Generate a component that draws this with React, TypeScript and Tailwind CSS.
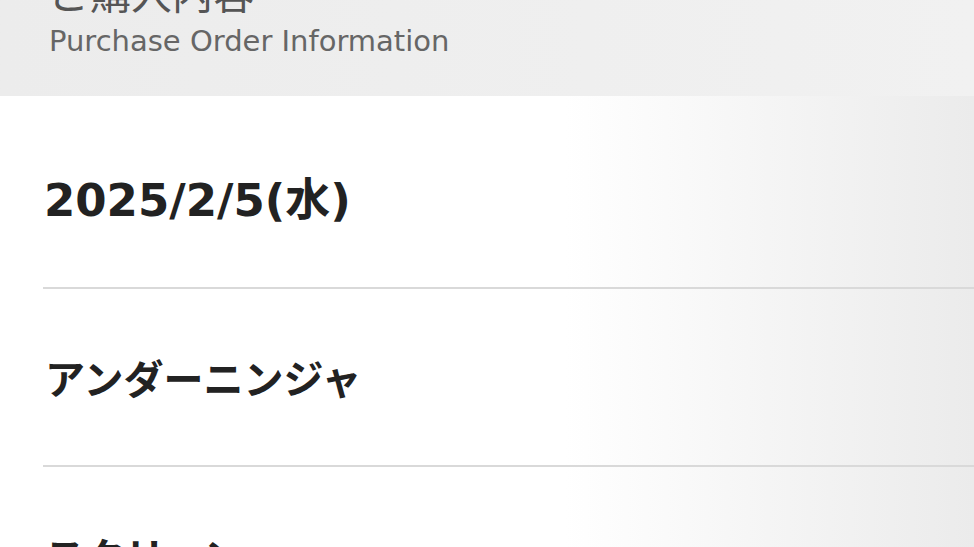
const rows = ['2025/2/5(水)', 'アンダーニンジャ', 'スクリーン'];

export default function App() {
  return (
    <div
      className="w-[974px] h-[547px] overflow-hidden bg-white"
      style={{ fontFamily: '"Noto Sans CJK JP", "Noto Sans", sans-serif' }}
    >
      {/* header band */}
      <div className="h-[96px] bg-gradient-to-r from-[#ececec] to-[#f1f1f1] pl-[49px] overflow-hidden">
        <h1 className="-mt-[31px] text-[41px] leading-[44px] font-normal text-[#555]">ご購入内容</h1>
        <p
          className="mt-[9px] text-[29px] leading-[38px] text-[#666]"
          style={{ fontFamily: '"DejaVu Sans", sans-serif' }}
        >
          Purchase Order Information
        </p>
      </div>

      {/* rows */}
      <div className="pl-[43px] bg-gradient-to-r from-white from-[58%] to-[#ebebeb]">
        {rows.map((r, i) => (
          <div
            key={i}
            className={`flex items-center border-b-2 border-[#d9d9d9] ${i === 0 ? 'h-[193px] pt-[18px]' : 'h-[178px]'}`}
          >
            {i === 0 ? (
              <span
                className="pl-[1px] font-bold text-[45px] text-[#222]"
                style={{ fontFamily: '"DejaVu Sans", "Noto Sans CJK JP", sans-serif' }}
              >
                {r}
              </span>
            ) : (
              <span className="pl-[2px] font-bold text-[40px] text-[#222]">{r}</span>
            )}
          </div>
        ))}
      </div>
    </div>
  );
}
